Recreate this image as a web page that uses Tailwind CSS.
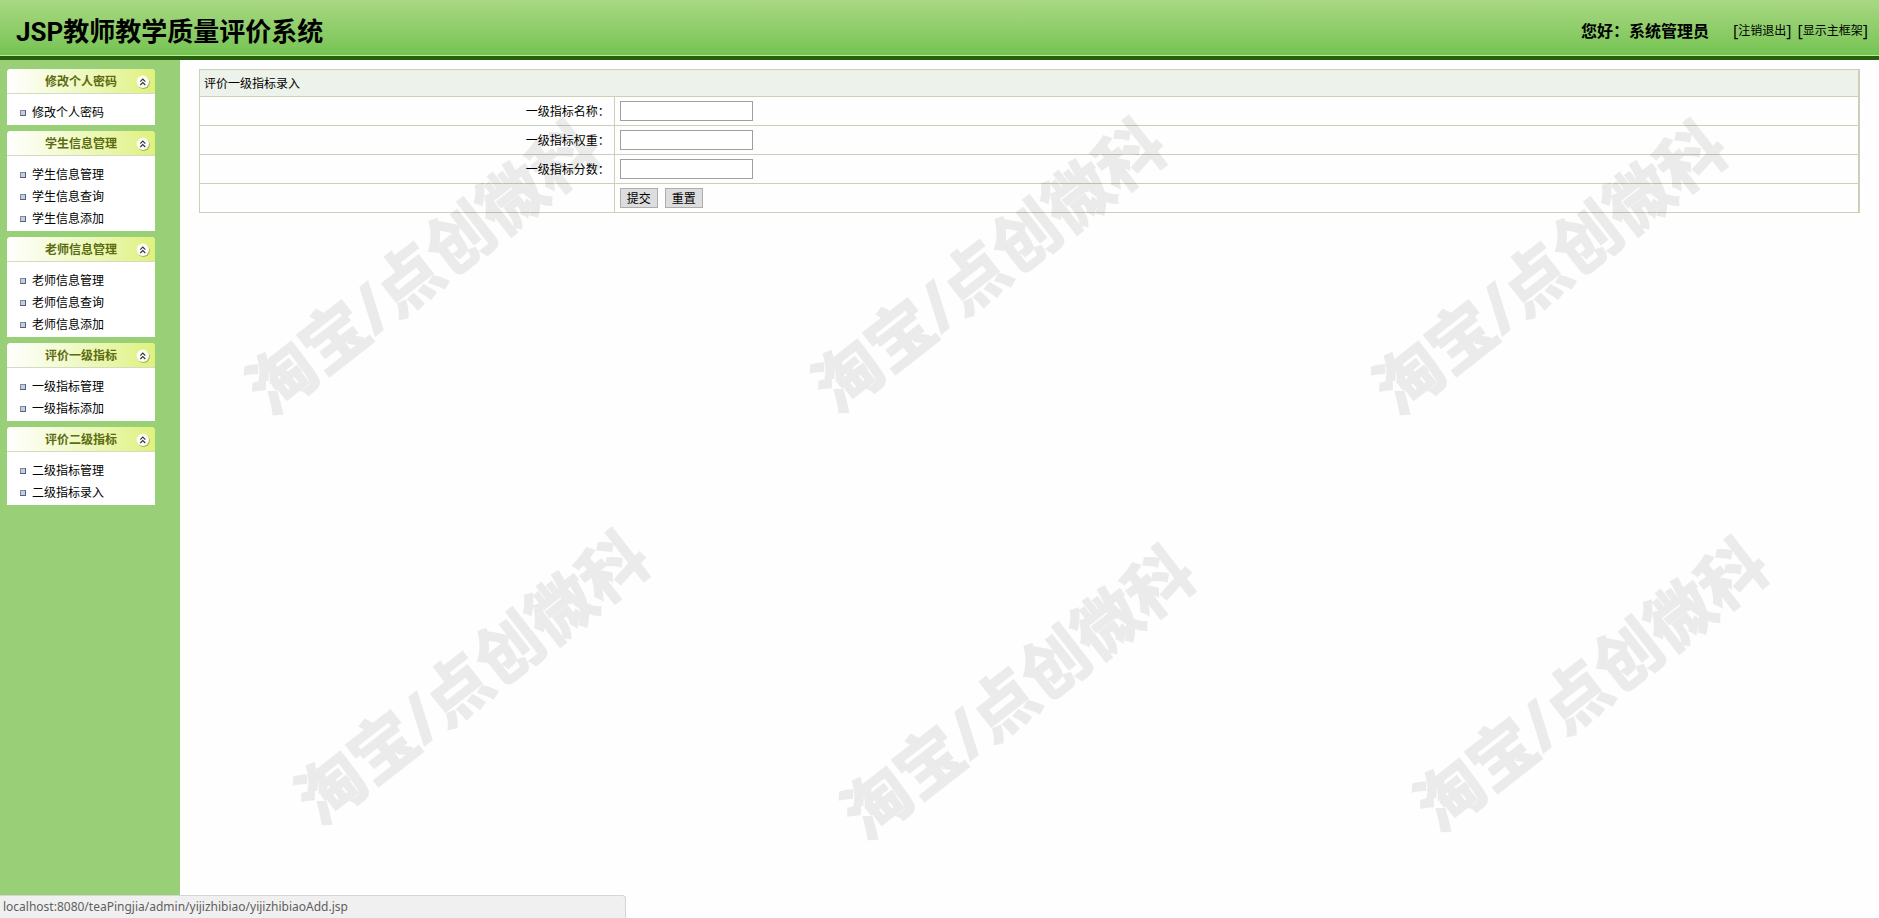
<!DOCTYPE html>
<html lang="zh-CN">
<head>
  <meta charset="UTF-8" />
  <title>JSP教师教学质量评价系统</title>
  <meta name="viewport" content="width=device-width, initial-scale=1.0" />
  <script src="https://cdn.jsdelivr.net/npm/@tailwindcss/browser@4"></script>
</head>
<body class="relative flex flex-col min-h-screen overflow-x-hidden bg-[#fefefe] text-black text-[12px] leading-[22px] font-['Open_Sans','Noto_Sans_CJK_SC',sans-serif]">
  <!-- icons shared by the menu -->
  <svg class="hidden">
    <symbol id="icon-up" viewBox="0 0 14 14">
      <circle cx="7.6" cy="7.8" r="6.2" fill="#8a9a50" opacity=".7" />
      <circle cx="6.8" cy="6.8" r="6.2" fill="#fbfcf6" />
      <path d="M4.3 6.6 6.8 4.1l2.5 2.5M4.3 10 6.8 7.5 9.3 10" fill="none" stroke="#333" stroke-width="1.1" />
    </symbol>
    <symbol id="icon-dot" viewBox="0 0 7 7">
      <rect x=".5" y=".5" width="5" height="5" fill="#c3cde0" stroke="#7f88a6" />
      <path d="M0 5.5h6M5.5 0v6" stroke="#59617f" />
    </symbol>
  </svg>

  <header class="flex justify-between items-center h-[60px] shrink-0 pl-4 pr-[11px] pb-px border-b-4 border-[#26600f] bg-linear-to-b from-[#a9d883] to-[#74c351] shadow-[inset_0_-1px_#b5ee90]">
    <h1 class="text-[26px] leading-[36px] font-bold pt-2 font-['Roboto','Noto_Sans_CJK_SC',sans-serif]">JSP教师教学质量评价系统</h1>
    <div class="flex items-center pt-[6px] text-[16px]">
      <span class="font-bold mr-6">您好：系统管理员</span>
      <span class="mr-[6px] flex items-center">[<a href="#" class="text-[12px]">注销退出</a>]</span>
      <span class="flex items-center">[<a href="#" class="text-[12px]">显示主框架</a>]</span>
    </div>
  </header>

  <div class="flex flex-1">
    <nav class="w-[180px] shrink-0 bg-[#99cf76] pl-[7px] pr-[25px] pt-[9px] flex flex-col gap-[6px]">
      <section class="bg-white rounded-t-sm pb-px">
        <h2 class="flex items-center h-[25px] pt-[2px] pl-[38px] pr-[5px] mb-2 rounded-t-sm border-b border-[#d3dbc0] bg-linear-to-r from-white to-[#dff17c] font-bold text-[#5c6b0e]">
          <span class="flex-1">修改个人密码</span>
          <button type="button" aria-label="收起"><svg class="block size-[14px]"><use href="#icon-up" /></svg></button>
        </h2>
        <ul class="pl-[13px]">
          <li class="flex items-center gap-[5px]"><svg class="size-[7px]"><use href="#icon-dot" /></svg><a href="#">修改个人密码</a></li>
        </ul>
      </section>
      <section class="bg-white rounded-t-sm pb-px">
        <h2 class="flex items-center h-[25px] pt-[2px] pl-[38px] pr-[5px] mb-2 rounded-t-sm border-b border-[#d3dbc0] bg-linear-to-r from-white to-[#dff17c] font-bold text-[#5c6b0e]">
          <span class="flex-1">学生信息管理</span>
          <button type="button" aria-label="收起"><svg class="block size-[14px]"><use href="#icon-up" /></svg></button>
        </h2>
        <ul class="pl-[13px]">
          <li class="flex items-center gap-[5px]"><svg class="size-[7px]"><use href="#icon-dot" /></svg><a href="#">学生信息管理</a></li>
          <li class="flex items-center gap-[5px]"><svg class="size-[7px]"><use href="#icon-dot" /></svg><a href="#">学生信息查询</a></li>
          <li class="flex items-center gap-[5px]"><svg class="size-[7px]"><use href="#icon-dot" /></svg><a href="#">学生信息添加</a></li>
        </ul>
      </section>
      <section class="bg-white rounded-t-sm pb-px">
        <h2 class="flex items-center h-[25px] pt-[2px] pl-[38px] pr-[5px] mb-2 rounded-t-sm border-b border-[#d3dbc0] bg-linear-to-r from-white to-[#dff17c] font-bold text-[#5c6b0e]">
          <span class="flex-1">老师信息管理</span>
          <button type="button" aria-label="收起"><svg class="block size-[14px]"><use href="#icon-up" /></svg></button>
        </h2>
        <ul class="pl-[13px]">
          <li class="flex items-center gap-[5px]"><svg class="size-[7px]"><use href="#icon-dot" /></svg><a href="#">老师信息管理</a></li>
          <li class="flex items-center gap-[5px]"><svg class="size-[7px]"><use href="#icon-dot" /></svg><a href="#">老师信息查询</a></li>
          <li class="flex items-center gap-[5px]"><svg class="size-[7px]"><use href="#icon-dot" /></svg><a href="#">老师信息添加</a></li>
        </ul>
      </section>
      <section class="bg-white rounded-t-sm pb-px">
        <h2 class="flex items-center h-[25px] pt-[2px] pl-[38px] pr-[5px] mb-2 rounded-t-sm border-b border-[#d3dbc0] bg-linear-to-r from-white to-[#dff17c] font-bold text-[#5c6b0e]">
          <span class="flex-1">评价一级指标</span>
          <button type="button" aria-label="收起"><svg class="block size-[14px]"><use href="#icon-up" /></svg></button>
        </h2>
        <ul class="pl-[13px]">
          <li class="flex items-center gap-[5px]"><svg class="size-[7px]"><use href="#icon-dot" /></svg><a href="#">一级指标管理</a></li>
          <li class="flex items-center gap-[5px]"><svg class="size-[7px]"><use href="#icon-dot" /></svg><a href="#">一级指标添加</a></li>
        </ul>
      </section>
      <section class="bg-white rounded-t-sm pb-px">
        <h2 class="flex items-center h-[25px] pt-[2px] pl-[38px] pr-[5px] mb-2 rounded-t-sm border-b border-[#d3dbc0] bg-linear-to-r from-white to-[#dff17c] font-bold text-[#5c6b0e]">
          <span class="flex-1">评价二级指标</span>
          <button type="button" aria-label="收起"><svg class="block size-[14px]"><use href="#icon-up" /></svg></button>
        </h2>
        <ul class="pl-[13px]">
          <li class="flex items-center gap-[5px]"><svg class="size-[7px]"><use href="#icon-dot" /></svg><a href="#">二级指标管理</a></li>
          <li class="flex items-center gap-[5px]"><svg class="size-[7px]"><use href="#icon-dot" /></svg><a href="#">二级指标录入</a></li>
        </ul>
      </section>
    </nav>

    <main class="flex-1 pl-[19px] pr-[19px] pt-[9px]">
      <form>
        <table class="w-full table-fixed border-collapse border border-r-2 border-[#ccd0b8]">
          <colgroup>
            <col class="w-1/4" />
            <col class="w-3/4" />
          </colgroup>
          <thead>
            <tr class="h-[27px] bg-[#edf2ea]">
              <th colspan="2" class="px-1 pt-[2px] text-left font-normal border border-[#ccd0b8]">评价一级指标录入</th>
            </tr>
          </thead>
          <tbody>
            <tr class="h-[29px]">
              <td class="px-1 pt-[2px] text-right border border-[#ccd0b8]"><label for="mingcheng">一级指标名称：</label></td>
              <td class="pl-[5px] border border-[#ccd0b8]"><input id="mingcheng" type="text" class="block w-[133px] h-5 px-px bg-white border border-[#a0a0a0]" /></td>
            </tr>
            <tr class="h-[29px]">
              <td class="px-1 pt-[2px] text-right border border-[#ccd0b8]"><label for="quanzhong">一级指标权重：</label></td>
              <td class="pl-[5px] border border-[#ccd0b8]"><input id="quanzhong" type="text" class="block w-[133px] h-5 px-px bg-white border border-[#a0a0a0]" /></td>
            </tr>
            <tr class="h-[29px]">
              <td class="px-1 pt-[2px] text-right border border-[#ccd0b8]"><label for="fenshu">一级指标分数：</label></td>
              <td class="pl-[5px] border border-[#ccd0b8]"><input id="fenshu" type="text" class="block w-[133px] h-5 px-px bg-white border border-[#a0a0a0]" /></td>
            </tr>
            <tr class="h-[29px]">
              <td class="border border-[#ccd0b8]"></td>
              <td class="pl-[5px] border border-[#ccd0b8]">
                <div class="flex gap-[7px]">
                  <button type="button" class="w-[38px] h-5 leading-5 bg-[#dddddd] border border-[#adadad]">提交</button>
                  <button type="reset" class="w-[38px] h-5 leading-5 bg-[#dddddd] border border-[#adadad]">重置</button>
                </div>
              </td>
            </tr>
          </tbody>
        </table>
      </form>
    </main>
  </div>

  <!-- watermark -->
  <div class="absolute inset-0 overflow-hidden pointer-events-none select-none text-[66px] leading-none font-bold whitespace-nowrap opacity-7 [-webkit-text-stroke:2px_black]">
    <span class="absolute left-[422px] top-[266px] -translate-1/2 -rotate-38">淘宝/点创微科</span>
    <span class="absolute left-[988px] top-[264px] -translate-1/2 -rotate-38">淘宝/点创微科</span>
    <span class="absolute left-[1549px] top-[266px] -translate-1/2 -rotate-38">淘宝/点创微科</span>
    <span class="absolute left-[471px] top-[676px] -translate-1/2 -rotate-38">淘宝/点创微科</span>
    <span class="absolute left-[1017px] top-[691px] -translate-1/2 -rotate-38">淘宝/点创微科</span>
    <span class="absolute left-[1590px] top-[683px] -translate-1/2 -rotate-38">淘宝/点创微科</span>
  </div>

  <div class="fixed left-0 bottom-0 w-1/3 h-[23px] pl-[3px] rounded-tr-sm border-t border-r border-[#d5d5d5] bg-[#f0f0f0] text-[#5f5f5f] font-['Noto_Sans',sans-serif]">localhost:8080/teaPingjia/admin/yijizhibiao/yijizhibiaoAdd.jsp</div>
</body>
</html>
